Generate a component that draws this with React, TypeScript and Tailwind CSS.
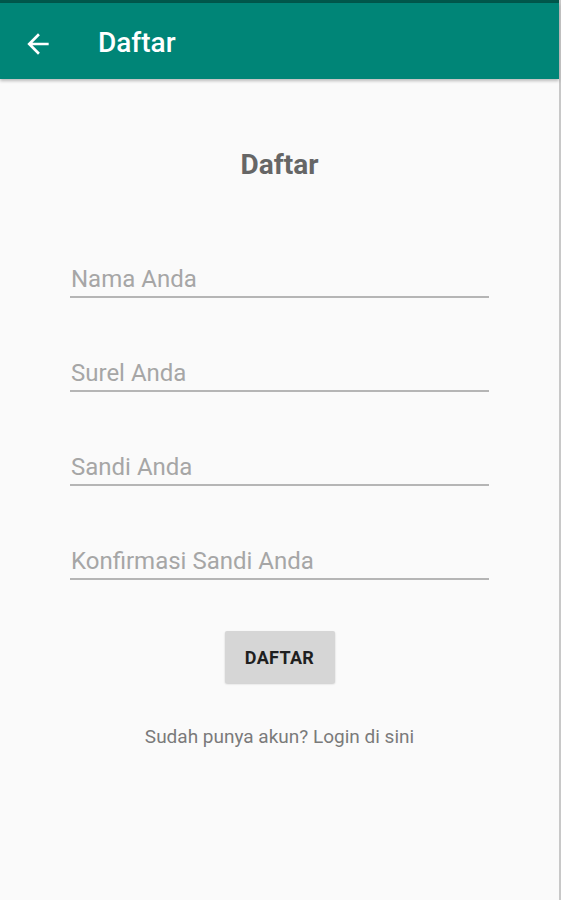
import React from "react";

const fields = ["Nama Anda", "Surel Anda", "Sandi Anda", "Konfirmasi Sandi Anda"];

export default function App() {
  return (
    <div
      className="w-[561px] h-[900px] bg-[#fafafa] flex flex-col border-r-2 border-[#c8c8c8]"
      style={{ fontFamily: "Roboto, 'Liberation Sans', sans-serif" }}
    >
      <div className="h-[3px] bg-[#00574b]" />
      <div className="h-[76px] bg-[#008577] flex items-start shadow-[0_2px_3px_rgba(0,0,0,0.25)]">
        <div className="w-[98px] pl-[22px] pt-[25px]">
          <svg width="32" height="32" viewBox="0 0 24 24" fill="none">
            <path d="M20 11H7.83l5.59-5.59L12 4l-8 8 8 8 1.41-1.41L7.83 13H20v-2z" fill="#ffffff" />
          </svg>
        </div>
        <span className="text-white text-[28px] font-medium leading-none pt-[26px]">Daftar</span>
      </div>

      <div className="flex flex-col items-center pt-[72px]">
        <h1 className="text-[#666666] text-[28px] font-bold leading-none">Daftar</h1>
        <div className="w-[419px] flex flex-col mt-[86px] gap-[61px]">
          {fields.map((f) => (
            <div key={f} className="flex flex-col">
              <span className="text-[#a6a6a6] text-[24px] leading-[28px] pl-[1px]">{f}</span>
              <div className="h-[2px] bg-[#b5b5b5] mt-[3px]" />
            </div>
          ))}
        </div>
        <button className="mt-[51px] w-[110px] h-[52px] bg-[#d6d6d6] rounded-[2px] shadow-[0_1px_2px_rgba(0,0,0,0.2)] text-[#1f1f1f] text-[18px] font-bold tracking-[0.3px]">
          DAFTAR
        </button>
        <p className="mt-[44px] text-[#7a7a7a] text-[19px] leading-none">Sudah punya akun? Login di sini</p>
      </div>
    </div>
  );
}
